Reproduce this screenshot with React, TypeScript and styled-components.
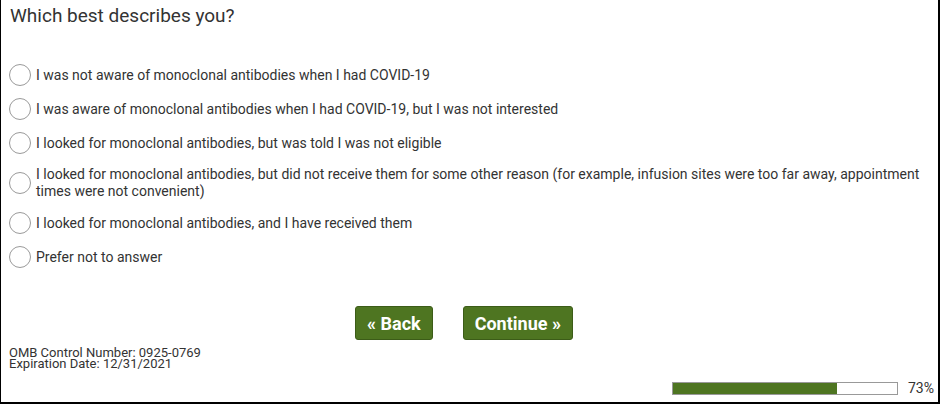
import { useState } from 'react'
import styled, { createGlobalStyle } from 'styled-components'

const GlobalStyle = createGlobalStyle`
  html, body {
    margin: 0;
    padding: 0;
    background: #fff;
  }
  body {
    font-family: Roboto, 'Liberation Sans', Arial, sans-serif;
    color: #333;
  }
`

const options = [
  'I was not aware of monoclonal antibodies when I had COVID-19',
  'I was aware of monoclonal antibodies when I had COVID-19, but I was not interested',
  'I looked for monoclonal antibodies, but was told I was not eligible',
  'I looked for monoclonal antibodies, but did not receive them for some other reason (for example, infusion sites were too far away, appointment times were not convenient)',
  'I looked for monoclonal antibodies, and I have received them',
  'Prefer not to answer',
]

export default function App() {
  const [picked, setPicked] = useState<number | null>(null)
  const progress = 73

  return (
    <>
      <GlobalStyle />
      <Frame>
        <Question>Which best describes you?</Question>
        <OptionList>
          {options.map((label, i) => (
            <Option key={i} onClick={() => setPicked(i)}>
              <Radio $checked={picked === i} />
              <OptionText>{label}</OptionText>
            </Option>
          ))}
        </OptionList>
        <Actions>
          <NavButton>« Back</NavButton>
          <NavButton>Continue »</NavButton>
        </Actions>
        <Footer>
          <Omb>
            <OmbLine>OMB Control Number: 0925-0769</OmbLine>
            <OmbLine>Expiration Date: 12/31/2021</OmbLine>
          </Omb>
          <ProgressRow>
            <ProgressTrack>
              <ProgressFill style={{ width: `${progress}%` }} />
            </ProgressTrack>
            <ProgressLabel>{progress}%</ProgressLabel>
          </ProgressRow>
        </Footer>
      </Frame>
    </>
  )
}

const Frame = styled.div`
  box-sizing: border-box;
  width: 940px;
  height: 404px;
  border-left: 1px solid #000;
  border-right: 2px solid #000;
  border-bottom: 2px solid #000;
  padding: 4px 0 0 8px;
  display: flex;
  flex-direction: column;
`

const Question = styled.h2`
  margin: 0;
  padding-left: 1px;
  font-size: 19px;
  font-weight: 400;
  line-height: 24px;
  color: #333;
`

const OptionList = styled.div`
  display: flex;
  flex-direction: column;
  gap: 12px;
  margin-top: 36px;
  padding-right: 10px;
`

const Option = styled.label`
  display: flex;
  align-items: center;
  gap: 5px;
  cursor: pointer;
`

const Radio = styled.span<{ $checked: boolean }>`
  flex: 0 0 auto;
  box-sizing: border-box;
  width: 22px;
  height: 22px;
  border-radius: 50%;
  border: 1px solid #9a9a9a;
  background: ${(p) => (p.$checked ? 'radial-gradient(circle, #4f7522 0 5px, #fff 6px)' : '#fff')};
`

const OptionText = styled.span`
  font-size: 14px;
  line-height: 17px;
  color: #333;
`

const Actions = styled.div`
  display: flex;
  justify-content: center;
  gap: 30px;
  margin-top: 38px;
  padding-right: 19px;
`

const NavButton = styled.button`
  height: 34px;
  padding: 0 11px;
  background: #4e7521;
  border: 1px solid #3c5c18;
  border-radius: 3px;
  color: #fff;
  font-family: Roboto, 'Liberation Sans', Arial, sans-serif;
  font-size: 18px;
  font-weight: 700;
  cursor: pointer;
`

const Footer = styled.div`
  display: flex;
  flex-direction: column;
  margin-top: 7px;
`

const Omb = styled.div`
  display: flex;
  flex-direction: column;
`

const OmbLine = styled.div`
  font-size: 13px;
  line-height: 11px;
  height: 11px;
  color: #333;
`

const ProgressRow = styled.div`
  display: flex;
  align-items: center;
  justify-content: flex-end;
  gap: 10px;
  margin-top: 11px;
  padding-right: 4px;
`

const ProgressTrack = styled.div`
  box-sizing: border-box;
  width: 226px;
  height: 13px;
  border: 1px solid #999;
  background: #fff;
`

const ProgressFill = styled.div`
  height: 100%;
  background: #4e7521;
`

const ProgressLabel = styled.span`
  font-size: 14px;
  color: #333;
`
